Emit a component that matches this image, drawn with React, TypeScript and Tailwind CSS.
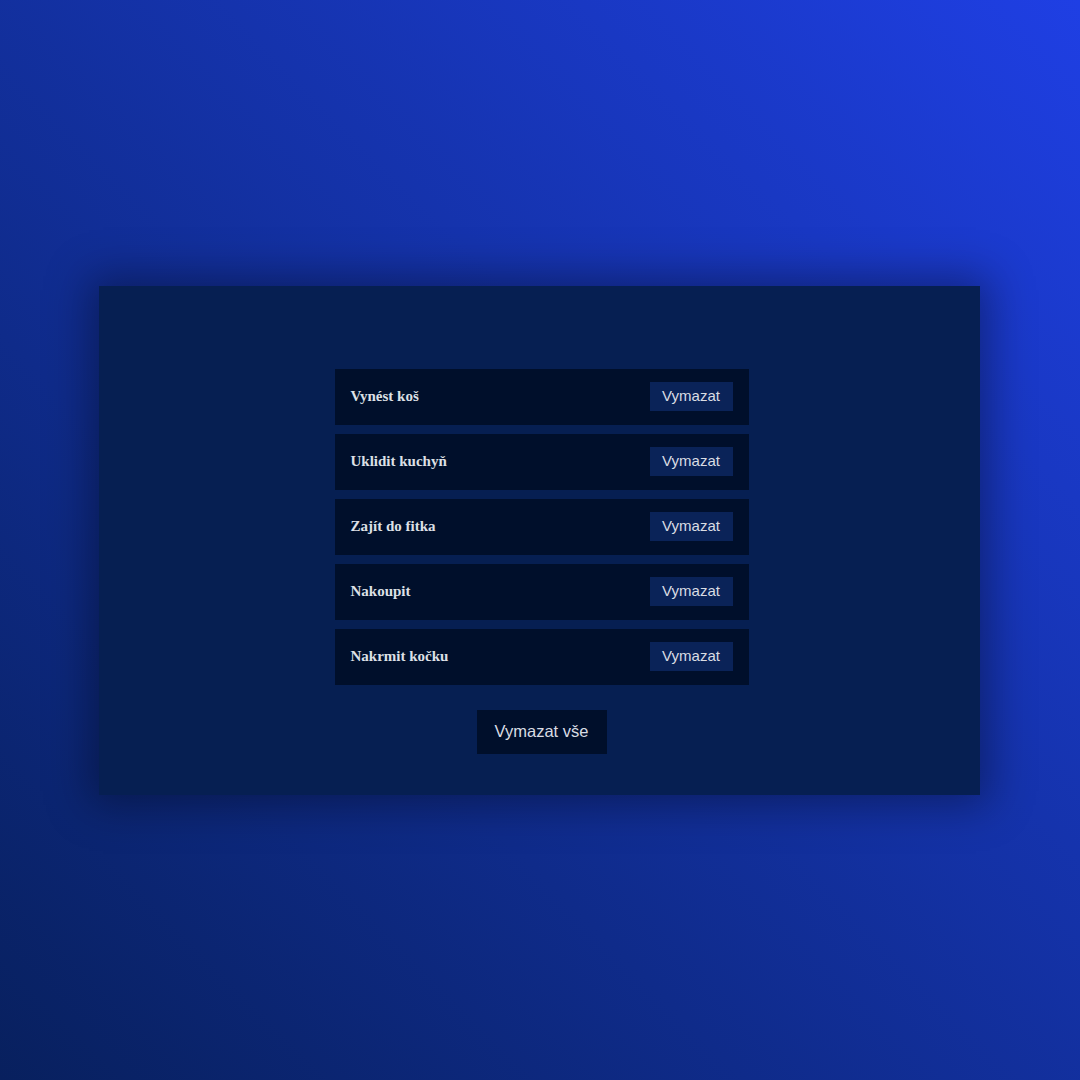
const tasks = [
  "Vynést koš",
  "Uklidit kuchyň",
  "Zajít do fitka",
  "Nakoupit",
  "Nakrmit kočku",
];

export default function App() {
  return (
    <div className="min-h-screen w-full flex items-center justify-center bg-gradient-to-tr from-[#08205e] to-[#1f3fe4]">
      <div className="w-[881px] h-[509px] mr-[2px] bg-[#061f52] shadow-[0_0_40px_10px_rgba(0,0,0,0.35)] flex flex-col items-center pt-[83px]">
        <ul className="w-[414px] ml-[5px] flex flex-col gap-[9px]">
          {tasks.map((t) => (
            <li
              key={t}
              className="h-[56px] bg-[#000f2b] flex items-center justify-between pl-4 pr-4"
            >
              <span className="font-['Liberation_Serif',serif] font-bold text-[15px] text-[#dde0e6]">
                {t}
              </span>
              <button className="h-[29px] w-[83px] bg-[#0a2358] text-[#d9dce3] text-[15px] font-['Liberation_Sans',Arial,sans-serif]">
                Vymazat
              </button>
            </li>
          ))}
        </ul>
        <button className="mt-[25px] h-[44px] w-[130px] ml-[5px] bg-[#000f2b] text-[#d9dce3] text-[16.5px] font-['Liberation_Sans',Arial,sans-serif]">
          Vymazat vše
        </button>
      </div>
    </div>
  );
}
